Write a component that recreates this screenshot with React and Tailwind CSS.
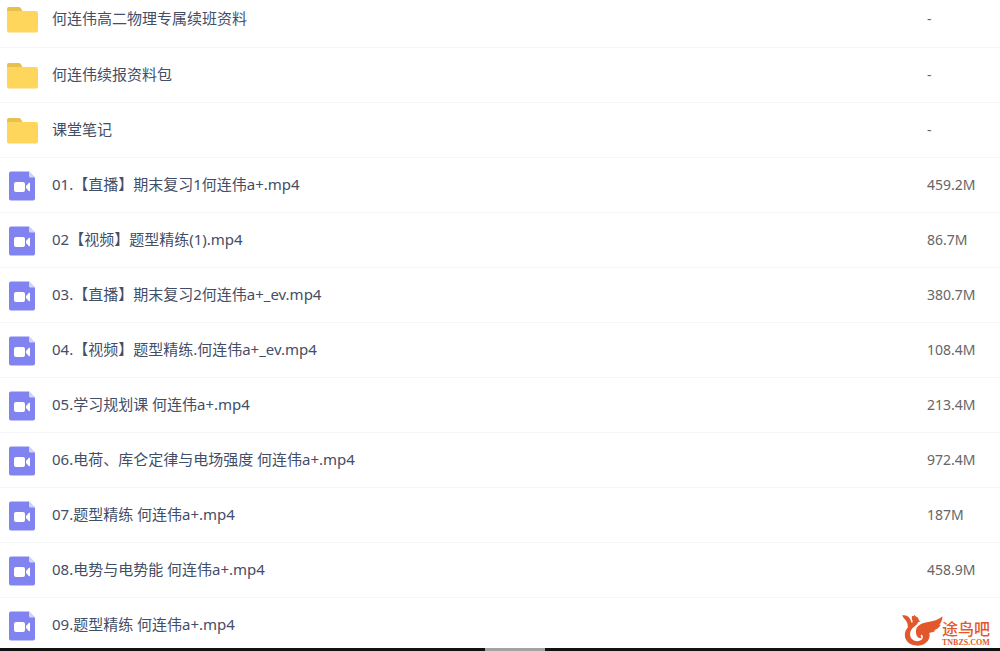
const files = [
  { type: 'folder', name: '何连伟高二物理专属续班资料', size: '-' },
  { type: 'folder', name: '何连伟续报资料包', size: '-' },
  { type: 'folder', name: '课堂笔记', size: '-' },
  { type: 'video', name: '01.【直播】期末复习1何连伟a+.mp4', size: '459.2M' },
  { type: 'video', name: '02【视频】题型精练(1).mp4', size: '86.7M' },
  { type: 'video', name: '03.【直播】期末复习2何连伟a+_ev.mp4', size: '380.7M' },
  { type: 'video', name: '04.【视频】题型精练.何连伟a+_ev.mp4', size: '108.4M' },
  { type: 'video', name: '05.学习规划课 何连伟a+.mp4', size: '213.4M' },
  { type: 'video', name: '06.电荷、库仑定律与电场强度 何连伟a+.mp4', size: '972.4M' },
  { type: 'video', name: '07.题型精练 何连伟a+.mp4', size: '187M' },
  { type: 'video', name: '08.电势与电势能 何连伟a+.mp4', size: '458.9M' },
  { type: 'video', name: '09.题型精练 何连伟a+.mp4', size: '' },
];

const FolderIcon = () => (
  <svg className="w-8 h-[26px]" viewBox="-1 0 32 26" aria-hidden="true">
    <path d="M0 2a2 2 0 0 1 2-2h10a2 2 0 0 1 1.6.8L15.5 4v4H0z" fill="#e8c04f" />
    <path d="M0 4h29a2 2 0 0 1 2 2v17.500a2 2 0 0 1-2 2H2a2 2 0 0 1-2-2z" fill="#ffd65c" />
  </svg>
);

const VideoIcon = () => (
  <svg className="w-[26px] h-[30px]" viewBox="0 0 26 30" aria-hidden="true">
    <path d="M2 .5h18L26 6.500v21a2 2 0 0 1-2 2H2a2 2 0 0 1-2-2v-25a2 2 0 0 1 2-2z" fill="#8083f0" />
    <path d="M20 .5l6 6h-4.500a1.500 1.500 0 0 1-1.500-1.500z" fill="#d3d4fb" />
    <rect x="5" y="11" width="11" height="10" rx="2" fill="#fff" />
    <path d="M17 15l3-3.200a.6.6 0 0 1 1 .4v7.600a.6.6 0 0 1-1 .4L17 17z" fill="#fff" />
  </svg>
);

const BirdLogo = () => (
  <svg className="w-[43px] h-[34px]" viewBox="12 14 128 102" fill="#e2572b" aria-hidden="true">
    {/* back feather */}
    <path d="M15 21c10-2 20 2 24 11 3 8 5 13 8 16-6 5-11 9-14 14-2-7 0-14-4-21-4-7-11-11-14-20z" />
    {/* head and body */}
    <path d="M44 22l6 2 2-5 5 6c6 2 8 6 8 11l5 4-7 1c-2 7-7 10-12 14-14 10-16 28-6 38 9 8 24 7 30-1 5-7 1-13-6-15l-4-2c8-3 20-4 30-4 8 16-4 40-34 41-24 0-39-15-38-34 1-14 9-22 18-29 6-6 7-11 3-16z" />
    {/* wing */}
    <path d="M58 80C52 60 62 48 82 43c20-3 38-5 54-19-1 12-4 20-10 26l5-1c-5 9-12 14-21 17l5 1c-14 9-30 5-40 9-6 3-5 9-1 13-8 2-14-3-16-9z" />
  </svg>
);

const App = () => {
  return (
    <div className="relative h-screen overflow-hidden bg-white font-['Noto_Sans','Noto_Sans_CJK_SC',sans-serif]">
      {/* File list, scrolled a little past its first row */}
      <table className="-mt-2 w-full table-fixed border-collapse text-left">
        <tbody>
          {files.map((file) => (
            <tr key={file.name} className="h-[55px] border-b border-[#f5f6f9]">
              <td className="w-[52px] p-0">
                <div className="flex w-11 justify-center pt-[2px]">
                  {file.type === 'folder' ? <FolderIcon /> : <VideoIcon />}
                </div>
              </td>
              <td className="truncate p-0 pb-[2px] text-[15px] leading-5 text-[#424e67]">{file.name}</td>
              <td className="w-[73px] p-0 text-sm leading-5 text-[#666]">{file.size}</td>
            </tr>
          ))}
        </tbody>
      </table>

      {/* Watermark */}
      <div className="absolute right-[10px] bottom-1 flex items-end text-[#e2572b]">
        <BirdLogo />
        <div className="-ml-[2px] flex flex-col">
          <span className="text-base leading-5 font-medium">途鸟吧</span>
          <span className="font-['Liberation_Serif',serif] text-[8px] leading-2 font-bold">TNBZS.COM</span>
        </div>
      </div>

      {/* Bottom edge */}
      <div className="absolute inset-x-0 bottom-0 flex h-[3px] justify-center bg-[#111] pl-[30px]">
        <div className="w-[60px] bg-[#a3a3a3]" />
      </div>
    </div>
  );
};

export default App;
